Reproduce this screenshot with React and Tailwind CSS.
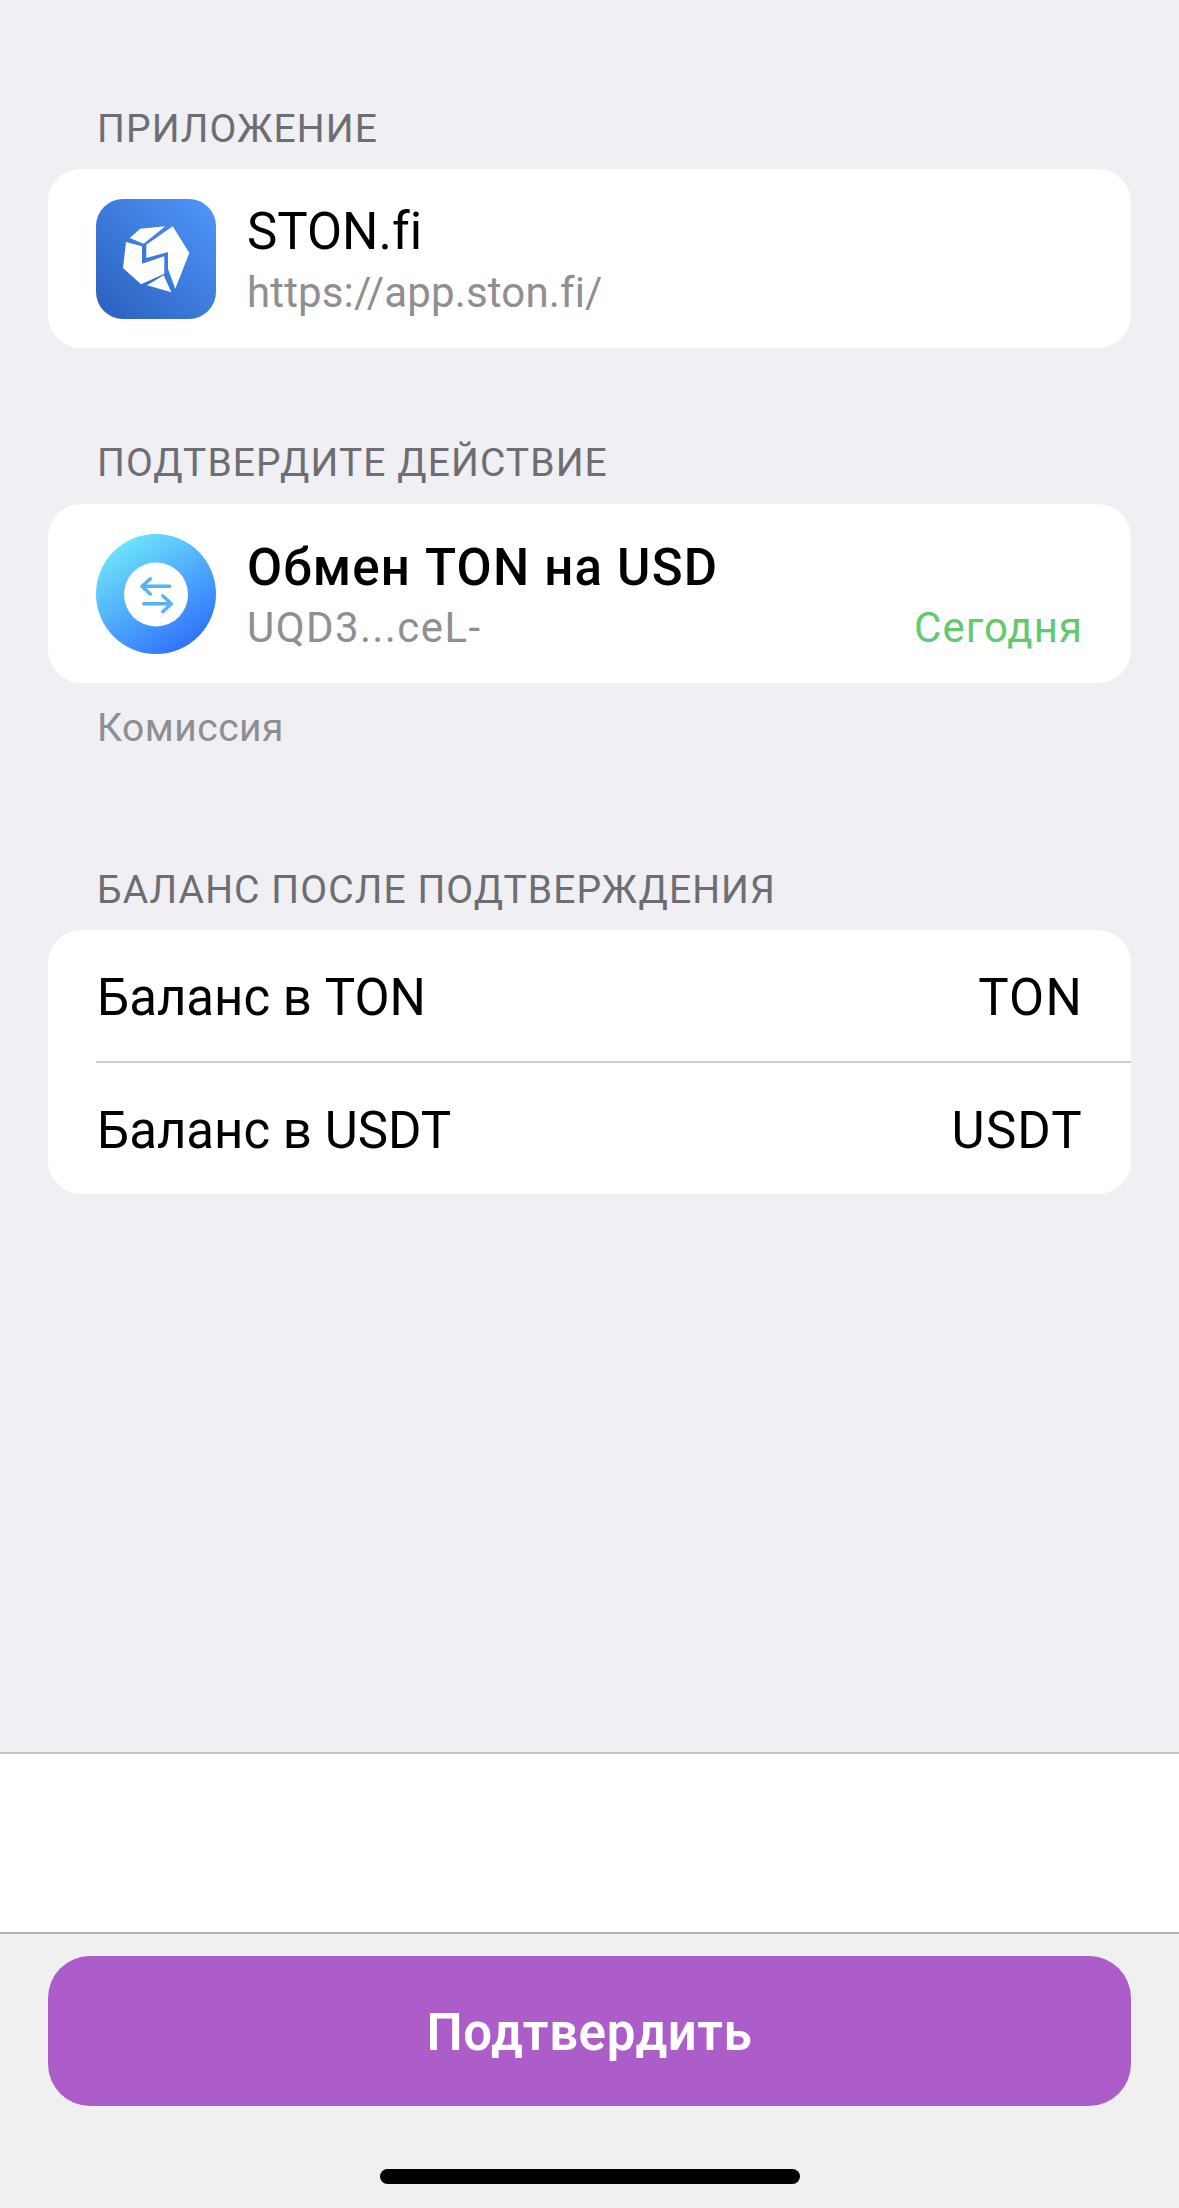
const sans = 'font-["Roboto","Liberation_Sans",sans-serif] [font-variant-ligatures:none]'

function SectionLabel({ children, className = '' }) {
  return (
    <div className={`px-[97px] pt-[2px] text-[39px] leading-[44px] tracking-[1.1px] text-[#6d6d72] ${className}`}>
      {children}
    </div>
  )
}

function StonLogo() {
  return (
    <svg width="120" height="120" viewBox="0 0 120 120" className="shrink-0 rounded-[27px]">
      <defs>
        <linearGradient id="ston" x1="0" y1="1" x2="1" y2="0">
          <stop offset="0" stopColor="#2a5fbd" />
          <stop offset="1" stopColor="#5097fb" />
        </linearGradient>
      </defs>
      <rect width="120" height="120" fill="url(#ston)" />
      <g fill="#fff">
        <polygon points="33.7,39 44.3,29.7 69.3,27.3 47.7,44.7" />
        <polygon points="30,43 46,47.3 46,64.7 68.3,57.3 68.3,74.7 45,85.3 27,69" />
        <polygon points="76.7,27.3 93.3,54 79.3,89.7 72,70 72,53 50.3,59 50.3,45.7" />
        <polygon points="67.7,76.3 75.3,93.3 51,86.3" />
      </g>
    </svg>
  )
}

function SwapIcon() {
  return (
    <svg width="120" height="120" viewBox="0 0 120 120" className="shrink-0">
      <defs>
        <linearGradient id="swap" x1="0.2" y1="0.05" x2="0.8" y2="0.95">
          <stop offset="0" stopColor="#6ee7fb" />
          <stop offset="1" stopColor="#2f6ffb" />
        </linearGradient>
      </defs>
      <circle cx="60" cy="60" r="60" fill="url(#swap)" />
      <circle cx="60" cy="60.5" r="32" fill="#fff" />
      <g fill="none" stroke="#58b2f6" strokeWidth="3.4" strokeLinecap="round" strokeLinejoin="round">
        <path d="M73.7 52.3H46.7M54.3 44.7L46 52.3L54.3 60" />
        <path d="M47.7 69.7H75.3M66.7 61.7L75.3 69.7L66.7 77.7" />
      </g>
    </svg>
  )
}

function BalanceRow({ label, value }) {
  return (
    <div className="flex h-[131px] items-center justify-between pl-[49px] pr-[48px] pt-[6px] text-[51px] text-black">
      <span>{label}</span>
      <span className="tracking-[1.2px]">{value}</span>
    </div>
  )
}

export default function App() {
  return (
    <div className={`flex h-[2208px] w-[1179px] flex-col overflow-hidden bg-[#efeff4] ${sans}`}>
      <div className="flex-1 pt-[105px]">
        <SectionLabel>ПРИЛОЖЕНИЕ</SectionLabel>
        <div className="mx-[48px] mt-[18px] flex h-[179px] items-center gap-[31px] rounded-[33px] bg-white px-[48px]">
          <StonLogo />
          <div className="flex flex-col pt-[6px]">
            <span className="text-[51px] leading-[61px] text-black">STON.fi</span>
            <span className="text-[42px] leading-[61px] tracking-[0.15px] text-[#8e8e93]">https://app.ston.fi/</span>
          </div>
        </div>

        <SectionLabel className="mt-[91px]">ПОДТВЕРДИТЕ ДЕЙСТВИЕ</SectionLabel>
        <div className="mx-[48px] mt-[19px] flex h-[179px] items-center gap-[31px] rounded-[33px] bg-white px-[48px]">
          <SwapIcon />
          <div className="flex flex-1 flex-col pt-[8px]">
            <span className="text-[51px] font-medium leading-[60px] tracking-[1.2px] text-black">Обмен TON на USD</span>
            <div className="flex items-baseline justify-between leading-[60px]">
              <span className="text-[42px] tracking-[1.4px] text-[#8e8e93]">UQD3...ceL-</span>
              <span className="text-[42px] tracking-[1px] text-[#63c96f]">Сегодня</span>
            </div>
          </div>
        </div>
        <div className="mt-[23px] px-[97px] text-[39px] leading-[44px] tracking-[0.5px] text-[#8e8e93]">Комиссия</div>

        <SectionLabel className="pt-[118px]">БАЛАНС ПОСЛЕ ПОДТВЕРЖДЕНИЯ</SectionLabel>
        <div className="mx-[48px] mt-[18px] rounded-[33px] bg-white">
          <BalanceRow label="Баланс в TON" value="TON" />
          <div className="ml-[48px] h-[2px] bg-[#cfcfd1]" />
          <BalanceRow label="Баланс в USDT" value="USDT" />
        </div>
      </div>

      <div className="h-[182px] border-y-2 border-t-[#c4c4c8] border-b-[#b4b4b6] bg-white" />

      <div className="flex h-[274px] flex-col items-center bg-[#f0f0f0] pt-[22px]">
        <button className="h-[150px] w-[1083px] rounded-[42px] bg-[#ad5dca] pt-[4px] text-[51px] font-semibold tracking-[0.6px] text-white">
          Подтвердить
        </button>
        <div className="mt-[63px] h-[15px] w-[420px] rounded-full bg-black" />
      </div>
    </div>
  )
}
